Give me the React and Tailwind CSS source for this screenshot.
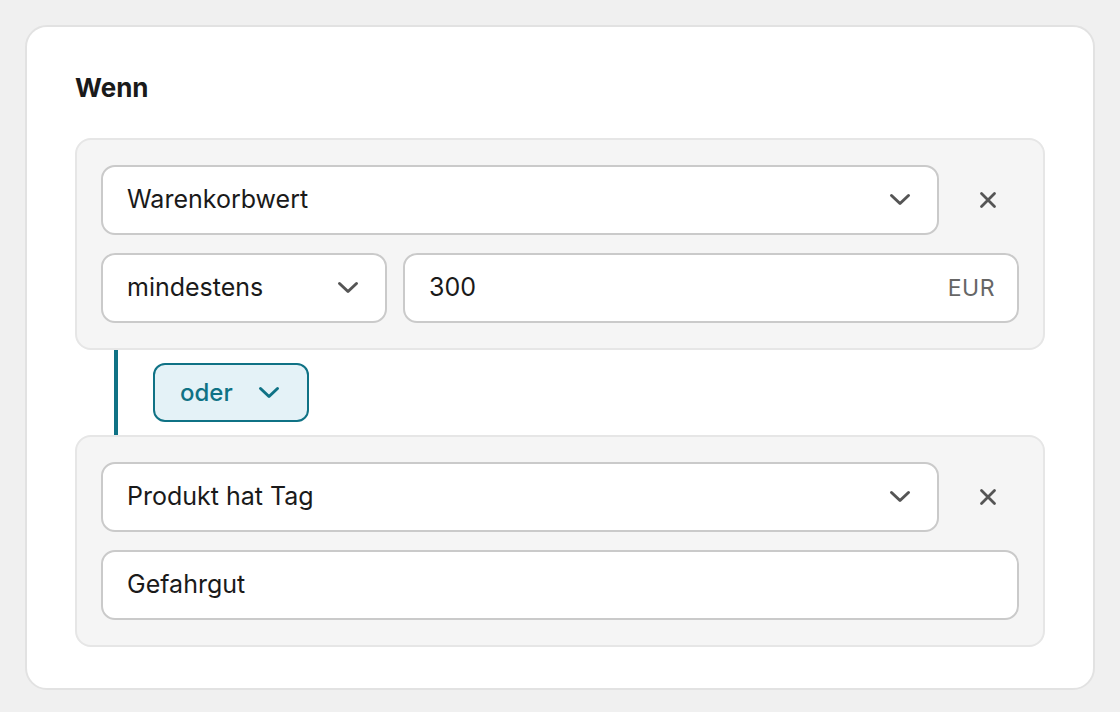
import React from 'react';

const Chevron = ({ className = 'text-[#555]' }) => (
  <svg width="22" height="14" viewBox="0 0 22 14" fill="none" className={className}>
    <path d="M2.5 2.5 L11 10.5 L19.5 2.5" stroke="currentColor" strokeWidth="3" strokeLinecap="round" strokeLinejoin="round" />
  </svg>
);

const Cross = () => (
  <svg width="18" height="18" viewBox="0 0 18 18" fill="none" className="text-[#555]">
    <path d="M2.5 2.5 L15.5 15.5 M15.5 2.5 L2.5 15.5" stroke="currentColor" strokeWidth="2.8" strokeLinecap="round" />
  </svg>
);

const Field = ({ children, className = '', pr = 'pr-[26px]' }) => (
  <div className={`flex items-center h-[70px] bg-white border-2 border-[#cacaca] rounded-[14px] pl-[24px] ${pr} text-[25px] text-[#1a1a1a] ${className}`}>
    {children}
  </div>
);

const SelectField = ({ value, className = '' }) => (
  <Field className={className}>
    <span className="flex-1">{value}</span>
    <Chevron />
  </Field>
);

const RemoveButton = () => (
  <button className="w-[62px] h-[70px] flex items-center justify-center shrink-0">
    <Cross />
  </button>
);

const ConditionGroup = ({ children }) => (
  <div className="bg-[#f5f5f5] border-2 border-[#e6e6e6] rounded-[16px] px-[24px] py-[25px] flex flex-col gap-[18px]">
    {children}
  </div>
);

export default function App() {
  return (
    <div className="min-h-screen bg-[#f0f0f0] p-[25px]" style={{ fontFamily: 'Inter, "Noto Sans", sans-serif' }}>
      <div className="bg-white border-2 border-[#e2e2e2] rounded-[22px] px-[48px] pt-[43px] pb-[41px] w-[1070px]">
        <h2 className="text-[26px] leading-[36px] font-bold text-[#1a1a1a] mb-[32px]">Wenn</h2>

        <ConditionGroup>
          <div className="flex gap-[18px]">
            <SelectField value="Warenkorbwert" className="flex-1" />
            <RemoveButton />
          </div>
          <div className="flex gap-[16px]">
            <SelectField value="mindestens" className="w-[286px]" />
            <Field className="flex-1" pr="pr-[22px]">
              <span className="flex-1">300</span>
              <span className="text-[23px] text-[#666] tracking-[0.5px]">EUR</span>
            </Field>
          </div>
        </ConditionGroup>

        {/* connector between the two groups */}
        <div className="ml-[39px] border-l-4 border-[#0f7285] py-[13px] pl-[35px]">
          <button className="flex items-center h-[59px] w-[156px] pl-[25px] pr-[27px] bg-[#e4f2f7] border-2 border-[#0f7285] rounded-[12px] text-[24px] font-medium text-[#0f7285]">
            <span className="flex-1 text-left">oder</span>
            <Chevron className="text-[#0f7285]" />
          </button>
        </div>

        <ConditionGroup>
          <div className="flex gap-[18px]">
            <SelectField value="Produkt hat Tag" className="flex-1" />
            <RemoveButton />
          </div>
          <Field>
            <span>Gefahrgut</span>
          </Field>
        </ConditionGroup>
      </div>
    </div>
  );
}
